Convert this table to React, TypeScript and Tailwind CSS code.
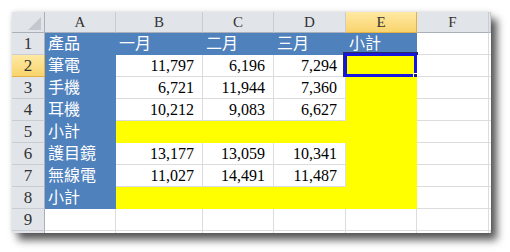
import React from 'react';

type Fill = 'blue' | 'yellow' | 'white';

const COLS = ['A', 'B', 'C', 'D', 'E', 'F', ''];

// Sheet contents, row 1..9, columns A..F
const ROWS: string[][] = [
  ['產品', '一月', '二月', '三月', '小計', ''],
  ['筆電', '11,797', '6,196', '7,294', '', ''],
  ['手機', '6,721', '11,944', '7,360', '', ''],
  ['耳機', '10,212', '9,083', '6,627', '', ''],
  ['小計', '', '', '', '', ''],
  ['護目鏡', '13,177', '13,059', '10,341', '', ''],
  ['無線電', '11,027', '14,491', '11,487', '', ''],
  ['小計', '', '', '', '', ''],
  ['', '', '', '', '', ''],
];

const fillOf = (r: number, c: number): Fill => {
  if (r === 1 && c <= 4) return 'blue';
  if (c === 0 && r <= 8) return 'blue';
  if (c === 4 && r >= 2 && r <= 8) return 'yellow';
  if ((r === 5 || r === 8) && c >= 1 && c <= 3) return 'yellow';
  return 'white';
};

const font = { fontFamily: '"Liberation Serif", "Noto Sans CJK TC", serif' };

function ColHeader({ label, selected }: { label: string; selected: boolean }) {
  return (
    <div
      className={
        selected
          ? 'flex items-center justify-center border-r border-b border-[#e3b145] bg-gradient-to-b from-[#ffe9a3] to-[#f9d46c] text-[15px] text-[#333]'
          : 'flex items-center justify-center border-r border-b border-r-[#c9cdd3] border-b-[#a9b0b9] bg-[#e1e5ea] text-[15px] text-[#333]'
      }
    >
      {label}
    </div>
  );
}

function RowHeader({ n, selected }: { n: number | string; selected: boolean }) {
  return (
    <div
      className={
        selected
          ? 'flex items-center justify-center border-r border-b border-[#e3b145] bg-gradient-to-b from-[#ffe9a3] to-[#f9d46c] text-[17px] text-[#333]'
          : 'flex items-center justify-center border-r border-b border-r-[#a9b0b9] border-b-[#c9cdd3] bg-[#e1e5ea] text-[17px] text-[#333]'
      }
    >
      {n}
    </div>
  );
}

function Cell({ r, c, text }: { r: number; c: number; text: string }) {
  const fill = fillOf(r, c);
  const isNumber = /^[\d,]+$/.test(text);
  const tone =
    fill === 'blue'
      ? 'bg-[#4f81bd] border-[#4f81bd] text-white'
      : fill === 'yellow'
        ? 'bg-[#ffff00] border-[#ffff00] text-black'
        : 'bg-white border-[#dadcdd] text-black';

  return (
    <div
      className={`relative flex items-end border-r border-b text-[16px] leading-[18px] ${tone} ${
        isNumber ? 'justify-end pr-2' : 'justify-start pl-[3px]'
      }`}
    >
      <span className="whitespace-nowrap pb-px">{text}</span>
      {r === 2 && c === 4 && (
        <div className="absolute -top-[2px] -left-[2px] -right-px -bottom-px border-[3px] border-[#1616dc] shadow-[0_0_0_1px_#2a2a66]">
          <div className="absolute -right-[5px] -bottom-[5px] h-[6px] w-[6px] border border-white bg-[#1a1a70]" />
        </div>
      )}
    </div>
  );
}

export default function App() {
  return (
    <div className="h-[252px] w-[510px] bg-white p-3" style={font}>
      <div className="grid w-[479px] grid-cols-[33px_71px_87px_71px_72px_71px_72px_2px] grid-rows-[21px_repeat(9,22px)_2px] bg-white shadow-[6px_7px_8px_rgba(0,0,0,0.65),0_0_5px_rgba(0,0,0,0.15)]">
        {/* select-all corner */}
        <div className="relative border-r border-b border-r-[#a9b0b9] border-b-[#a9b0b9] bg-[#e1e5ea]">
          <svg className="absolute right-[3px] bottom-[2px]" width="13" height="13" viewBox="0 0 13 13">
            <polygon points="13,0 13,13 0,13" fill="#c3c8ce" />
          </svg>
        </div>
        {COLS.map((c, i) => (
          <ColHeader key={i} label={c} selected={c === 'E'} />
        ))}

        {ROWS.map((row, ri) => (
          <React.Fragment key={ri}>
            <RowHeader n={ri + 1} selected={ri + 1 === 2} />
            {row.map((text, ci) => (
              <Cell key={ci} r={ri + 1} c={ci} text={text} />
            ))}
            <div className="border-b border-[#dadcdd] bg-white" />
          </React.Fragment>
        ))}

        {/* sliver of row 10 */}
        <div className="border-r border-[#a9b0b9] bg-[#e1e5ea]" />
        {COLS.map((_, i) => (
          <div key={i} className="border-r border-[#dadcdd] bg-white" />
        ))}
      </div>
    </div>
  );
}
